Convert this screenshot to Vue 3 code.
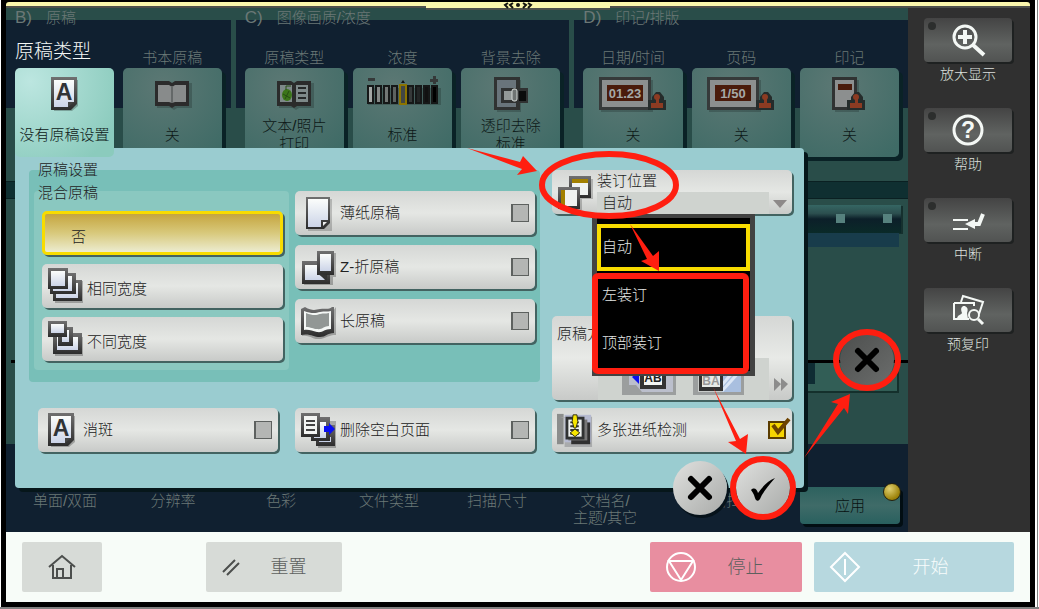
<script setup>
import { ref } from 'vue'

const sections = [
  {
    code: 'B)', name: '原稿',
    cards: [
      { title: '原稿类型', icon: 'page-a', lines: ['没有原稿设置'], active: true },
      { title: '书本原稿', icon: 'book', lines: ['关'] },
    ],
  },
  {
    code: 'C)', name: '图像画质/浓度',
    cards: [
      { title: '原稿类型', icon: 'photo-book', lines: ['文本/照片', '打印'] },
      { title: '浓度', icon: 'density', lines: ['标准'] },
      { title: '背景去除', icon: 'bleed', lines: ['透印去除', '标准'] },
    ],
  },
  {
    code: 'D)', name: '印记/排版',
    cards: [
      { title: '日期/时间', icon: 'stamp-date', lines: ['关'] },
      { title: '页码', icon: 'stamp-page', lines: ['关'] },
      { title: '印记', icon: 'stamp', lines: ['关'] },
    ],
  },
]

// Lettering drawn on top of an icon, placed in its 36px box.
const lettering = {
  'page-a': { text: 'A', x: 18, y: 24, size: 23, fill: '#303336' },
  'stamp-date': { text: '01.23', x: 10, y: 22, size: 13, fill: '#a5a9a7' },
  'stamp-page': { text: '1/50', x: 10, y: 22, size: 13, fill: '#a5a9a7' },
  help: { text: '?', x: 18, y: 26, size: 23, fill: '#f4f8f5' },
}

const mixed = ref('none')
const mixedOptions = [
  { value: 'none', text: '否' },
  { value: 'same', text: '相同宽度', icon: 'stack-same' },
  { value: 'diff', text: '不同宽度', icon: 'stack-diff' },
]

const paper = ref([
  { text: '薄纸原稿', icon: 'thin', on: false },
  { text: 'Z-折原稿', icon: 'zfold', on: false },
  { text: '长原稿', icon: 'long', on: false },
])
const extras = ref([
  { text: '消斑', icon: 'page-a', on: false },
  { text: '删除空白页面', icon: 'blank', on: false },
  { text: '多张进纸检测', icon: 'multifeed', on: true },
])

const binding = ref('自动')
const bindingOptions = ['自动', '左装订', '顶部装订']

const lowerTabs = [['单面/双面'], ['分辨率'], ['色彩'], ['文件类型'], ['扫描尺寸'], ['文档名/', '主题/其它'], ['页面扫描']]

const sideKeys = [
  { text: '放大显示', icon: 'zoom', led: true },
  { text: '帮助', icon: 'help', led: true },
  { text: '中断', icon: 'interrupt', led: true },
  { text: '预复印', icon: 'proof', led: false },
]
</script>

<template>
  <div class="frame">
    <svg class="defs" aria-hidden="true">
      <defs>
        <linearGradient id="edge" x1="0" y1="0" x2="0" y2="1">
          <stop offset="0" stop-color="#707070" /><stop offset="1" stop-color="#2c2c2c" />
        </linearGradient>
        <linearGradient id="sheet" x1="0" y1="0" x2="0" y2="1">
          <stop offset="0" stop-color="#fbfdfb" /><stop offset="1" stop-color="#ccd4e8" />
        </linearGradient>
      </defs>
      <symbol id="page-a" viewBox="0 0 36 36">
        <path d="M8 4h24v26l-6 5H8z" fill="#00000040" />
        <path d="M5 1h26v27l-6 6H5z" fill="url(#edge)" />
        <path d="M8 4h20v22h-6v5H8z" fill="url(#sheet)" />
        <path d="M22 31v-5h6z" fill="#444" />
      </symbol>
      <symbol id="book" viewBox="0 0 36 36">
        <path d="M3 7h35v25H23l-3 2-3-2H3z" fill="#00000030" />
        <path d="M1 5h14l3 2 3-2h14v25H21l-3 2-3-2H1z" fill="#2b2b2b" />
        <path d="M4 9h11l3 2v16l-3-1H4zM32 9H21l-3 2v16l3-1h11z" fill="#888b8b" />
        <path d="M17 10h2v17h-2z" fill="#646868" />
      </symbol>
      <symbol id="photo-book" viewBox="0 0 36 36">
        <path d="M3 7h35v25H23l-3 2-3-2H3z" fill="#00000030" />
        <path d="M1 5h14l3 2 3-2h14v25H21l-3 2-3-2H1z" fill="#2b2b2b" />
        <path d="M4 9h12v17H4zM20 9h12v17H20z" fill="#7e8989" />
        <ellipse cx="11" cy="19" rx="5" ry="6" fill="#3c751a" />
        <path d="M10 14V10h5M7 18l7 4M13 15l-4 8" stroke="#274c14" fill="none" />
        <path d="M22 12h8M22 17h8M22 22h8" stroke="#252828" stroke-width="2" />
      </symbol>
      <symbol id="density" viewBox="0 0 76 36">
        <path d="M3 12h73v17H3z" fill="#00000030" />
        <path d="M3 2h7v3H3zM65 3h8v3h-8zM68 0h3v8h-3z" fill="#353939" />
        <g stroke="#161818" stroke-width="2">
          <rect x="3" y="10" width="5" height="17" fill="#a3a7a5" />
          <rect x="11" y="10" width="5" height="17" fill="#858987" />
          <rect x="19" y="10" width="5" height="17" fill="#737775" />
          <rect x="27" y="10" width="5" height="17" fill="#5c6260" />
          <rect x="43" y="10" width="5" height="17" fill="#353939" />
          <rect x="51" y="10" width="5" height="17" fill="#222525" />
          <rect x="59" y="10" width="5" height="17" fill="#111" />
          <rect x="67" y="10" width="5" height="17" fill="#000" />
        </g>
        <rect x="35" y="9" width="6" height="19" fill="#424745" stroke="#8c7400" stroke-width="2" />
        <path d="M36 7l2-3 2 3z" fill="#111" />
      </symbol>
      <symbol id="bleed" viewBox="0 0 36 36">
        <path d="M4 4h24v32H4z" fill="#00000030" />
        <path d="M1 1h26v33H1z" fill="#303232" /><path d="M4 4h19v27H4z" fill="#69747b" />
        <path d="M8 12h27v15H8z" fill="#303232" /><path d="M11 15h9v9h-9z" fill="#939998" />
        <rect x="19" y="13" width="5" height="12" rx="2" fill="#6f7473" stroke="#d5dad8" />
        <path d="M26 15h7v10h-7z" fill="#0b0c0c" />
      </symbol>
      <symbol id="stamp-body" viewBox="0 0 20 20">
        <path d="M1 19V9h4V6l4-5h4l4 5v3h2v10z" fill="#252c2b" />
        <circle cx="10" cy="6" r="3" fill="#8c3b22" />
        <path d="M9 8h3v4h4v5H4v-5h5z" fill="#8c3b22" />
      </symbol>
      <symbol id="stamp-date" viewBox="0 0 76 36">
        <path d="M6 4h52v32H6z" fill="#00000030" />
        <path d="M4 1h52v33H4z" fill="#363a3a" /><path d="M7 4h46v27H7z" fill="#8c8f8f" />
        <path d="M12 9h36v16H12z" fill="#4a1b0b" />
        <use href="#stamp-body" x="52" y="15" width="20" height="20" />
      </symbol>
      <symbol id="stamp-page" viewBox="0 0 76 36">
        <path d="M6 4h52v32H6z" fill="#00000030" />
        <path d="M4 1h52v33H4z" fill="#363a3a" /><path d="M7 4h46v27H7z" fill="#8c8f8f" />
        <path d="M12 9h36v16H12z" fill="#4a1b0b" />
        <use href="#stamp-body" x="52" y="15" width="20" height="20" />
      </symbol>
      <symbol id="stamp" viewBox="0 0 36 36">
        <path d="M4 4h24v32H4z" fill="#00000030" />
        <path d="M1 1h25v33H1z" fill="#303232" /><path d="M4 4h19v27H4z" fill="#8c8f8f" />
        <path d="M7 8h14v6H7z" fill="#4a1b0b" />
        <use href="#stamp-body" x="15" y="15" width="20" height="20" />
      </symbol>
      <symbol id="stack-same" viewBox="0 0 36 36">
        <path d="M8 22h13v-8h15v22H8z" fill="#00000040" />
        <path d="M6 13h29v21H6z" fill="url(#edge)" /><path d="M9 16h22v15H9z" fill="url(#sheet)" />
        <path d="M3 6h26v21H3z" fill="url(#edge)" /><path d="M6 9h19v15H6z" fill="url(#sheet)" />
        <path d="M1 1h20v21H1z" fill="url(#edge)" /><path d="M4 4h14v15H4z" fill="url(#sheet)" />
      </symbol>
      <symbol id="stack-diff" viewBox="0 0 36 36">
        <path d="M8 17h28v19H8z" fill="#00000040" />
        <path d="M6 13h29v21H6z" fill="url(#edge)" /><path d="M10 17h21v13H10z" fill="url(#sheet)" />
        <path d="M11 7h15v19H11z" fill="url(#edge)" /><path d="M15 10h7v12h-7z" fill="url(#sheet)" />
        <path d="M1 1h19v16H1z" fill="url(#edge)" /><path d="M4 4h13v9H4z" fill="url(#sheet)" />
      </symbol>
      <symbol id="thin" viewBox="0 0 36 36">
        <path d="M8 4h24v32H8z" fill="#00000030" />
        <path d="M6 2h24v26l-6 6H6z" fill="url(#edge)" />
        <path d="M8 4h20v21h-7v7H8z" fill="url(#sheet)" /><path d="M23 31v-4h4z" fill="#eee" />
      </symbol>
      <symbol id="zfold" viewBox="0 0 36 36">
        <path d="M4 14h16V4h16v24h-3v9H4z" fill="#00000040" />
        <path d="M2 12h16v7h12v16H2z" fill="url(#edge)" />
        <path d="M5 16h13l2 9 5 6H5z" fill="url(#sheet)" />
        <path d="M17 2h17v24H17z" fill="url(#edge)" /><path d="M20 5h11v17H20z" fill="url(#sheet)" />
        <path d="M17 24l10 8V26z" fill="#333" />
      </symbol>
      <symbol id="long" viewBox="0 0 36 36">
        <path d="M2 8v25c8-2 12 5 19 3s9-4 15-4V4l-3 4z" fill="#00000040" />
        <path d="M1 6l4-2c7 4 10 3 15 2 6-1 8 1 12-2h2v26c-7 0-8 4-14 4-7 0-10-4-19-2z" fill="url(#edge)" />
        <path d="M4 8c8 3 12 2 16 1 5-1 7 0 11-1v18c-7 0-8 4-14 3-5-1-8-3-13-2z" fill="#f4f7f5" />
        <path d="M6 10c7 3 11 2 14 1 4-1 5 0 9-1v13c-5 0-7 4-12 3-4 0-6-2-11-2z" fill="#929795" />
      </symbol>
      <symbol id="blank" viewBox="0 0 36 36">
        <path d="M18 9h18v28H18z" fill="#00000040" />
        <path d="M16 13h19v21H16z" fill="url(#edge)" /><path d="M19 25h12v5H19z" fill="#c8d2e8" />
        <path d="M11 5h19v24H11z" fill="url(#edge)" /><path d="M14 10h12v16H14z" fill="url(#sheet)" />
        <path d="M1 1h19v24H1z" fill="url(#edge)" /><path d="M4 4h13v18H4z" fill="#f3f5f3" />
        <path d="M6 9h9M6 13h9M6 18h9" stroke="#444" stroke-width="2" />
        <path d="M24 14h5v-3l6 6-6 6v-3h-5z" fill="#0b10ef" />
      </symbol>
      <symbol id="multifeed" viewBox="0 0 38 36">
        <path d="M0 1h7v32H0z" fill="#8b8d8c" /><path d="M3 5h5v31h29V4H9z" fill="#a9abac" />
        <path d="M8 2h28v29H8z" fill="#b5bad0" />
        <path d="M15 10h20v23H15z" fill="#303030" /><path d="M12 7h20v22H12z" fill="#777" />
        <path d="M9 4h20v24H9z" fill="#303232" /><path d="M12 7h14v18H12z" fill="#eef1ef" />
        <path d="M14 10h9M14 14h9M14 18h9M14 22h9" stroke="#333" stroke-width="2" />
        <path d="M17 2h4l1 7-2 7h-2l-2-7zM19 17l5 4-5 4-5-4z" fill="#f7e600" stroke="#2b2a10" />
      </symbol>
      <symbol id="zoom" viewBox="0 0 36 36">
        <g fill="none" stroke="#f4f8f5" stroke-width="3">
          <circle cx="15" cy="15" r="11" /><path d="M15 8v14M8 15h14M23 23l11 10" stroke-width="4" />
        </g>
      </symbol>
      <symbol id="help" viewBox="0 0 36 36">
        <circle cx="18" cy="18" r="14" fill="none" stroke="#f4f8f5" stroke-width="3" />
      </symbol>
      <symbol id="interrupt" viewBox="0 0 36 36">
        <path d="M3 18h15M3 27h15" stroke="#f4f8f5" stroke-width="2" />
        <path d="M33 12l-4 10h-8" fill="none" stroke="#f4f8f5" stroke-width="4" />
        <path d="M15 22l10-5v10z" fill="#f4f8f5" />
      </symbol>
      <symbol id="proof" viewBox="0 0 36 36">
        <path d="M11 10l2-6 20 6-4 12" fill="none" stroke="#f4f8f5" stroke-width="2" />
        <path d="M4 11h20v3M19 27H4V11" fill="none" stroke="#f4f8f5" stroke-width="2" />
        <path d="M7 27c0-4 4-4 5-6-2-5 0-7 2-7s5 2 3 7l1 6z" fill="#f4f8f5" />
        <circle cx="24" cy="23" r="5" fill="none" stroke="#f4f8f5" stroke-width="2" /><path d="M28 27l5 5" stroke="#f4f8f5" stroke-width="3" />
      </symbol>
      <symbol id="cross" viewBox="0 0 28 28">
        <path d="M5 5l18 18M23 5L5 23" stroke="#000" stroke-width="6" stroke-linecap="round" />
      </symbol>
      <symbol id="tick" viewBox="0 0 28 28">
        <path d="M2 16c3-3 6-1 7 3C14 12 19 7 26 4 20 11 14 18 11 25 9 28 7 27 6 24 5 20 4 19 2 16z" fill="#000" />
      </symbol>
    </svg>

    <div class="screen">
      <div class="strip">
        <button class="strip-tab" aria-label="展开">
          <svg viewBox="0 0 30 7" width="30" height="7">
            <path d="M5 1L2 3l3 3M10 1L7 3l3 3M20 1l3 2-3 3M25 1l3 2-3 3" fill="none" stroke="#151510" stroke-width="2" />
            <circle cx="15" cy="3" r="2" fill="#151510" />
          </svg>
        </button>
      </div>

      <div class="body">
        <main class="scanner">
          <div class="sections">
            <section v-for="s in sections" :key="s.code" class="section">
              <h2><span>{{ s.code }}</span>{{ s.name }}</h2>
              <div class="cards">
                <div v-for="c in s.cards" :key="c.title" class="cell">
                  <h3 :class="{ on: c.active }">{{ c.title }}</h3>
                  <button class="card" :class="{ active: c.active }">
                    <svg class="card-icon" viewBox="-20 0 76 36">
                      <use :href="'#' + c.icon" x="-20" width="76" height="36" />
                      <text v-if="lettering[c.icon]" class="letter" :x="lettering[c.icon].x" :y="lettering[c.icon].y" :font-size="lettering[c.icon].size" :fill="lettering[c.icon].fill">{{ lettering[c.icon].text }}</text>
                    </svg>
                    <span class="card-text"><span v-for="l in c.lines" :key="l">{{ l }}</span></span>
                  </button>
                </div>
              </div>
            </section>
          </div>

          <div class="band"></div>
          <div class="rail"><i></i><i></i></div>
          <div class="rail-foot"></div>
          <div class="rule"></div>
          <div class="tray"><i></i></div>

          <div class="lower">
            <div class="tabs">
              <a v-for="t in lowerTabs" :key="t[0]" href="#"><span v-for="l in t" :key="l">{{ l }}</span></a>
            </div>
            <button class="apply">应用<i></i></button>
          </div>

          <button class="round dim" aria-label="关闭"><svg><use href="#cross" /></svg></button>

          <div class="dialog" role="dialog" aria-label="原稿设置">
            <div class="upper">
              <section class="group">
                <h3>原稿设置</h3>
                <div class="mixed">
                  <h4>混合原稿</h4>
                  <label v-for="o in mixedOptions" :key="o.value" class="tile radio" :class="{ picked: mixed === o.value }">
                    <input v-model="mixed" class="hidden" type="radio" name="mixed" :value="o.value">
                    <svg v-if="o.icon" class="icon"><use :href="'#' + o.icon" /></svg>
                    <span>{{ o.text }}</span>
                  </label>
                </div>
                <div class="column">
                  <label v-for="p in paper" :key="p.text" class="tile">
                    <svg class="icon"><use :href="'#' + p.icon" /></svg>
                    <span class="grow">{{ p.text }}</span>
                    <input v-model="p.on" type="checkbox">
                  </label>
                </div>
              </section>

              <div class="right">
                <div class="tile binding">
                  <svg class="icon" viewBox="0 0 36 36">
                    <path d="M14 5h22v20H25v11H4V18h10z" fill="#00000035" />
                    <path d="M12 2h22v22H12z" fill="url(#edge)" /><path d="M15 5h16v16H15z" fill="#f0f3f1" /><path d="M15 5h16v4H15z" fill="#a28000" />
                    <path d="M1 13h22v22H1z" fill="url(#edge)" /><path d="M4 16h16v16H4z" fill="#f0f3f1" /><path d="M4 16h4v16H4z" fill="#a28000" />
                  </svg>
                  <div class="binding-field">
                    <label for="binding">装订位置</label>
                    <select id="binding" v-model="binding">
                      <option v-for="b in bindingOptions" :key="b">{{ b }}</option>
                    </select>
                  </div>
                  <svg class="caret" viewBox="0 0 14 8"><path d="M0 0h14L7 8z" fill="#8d8989" /></svg>
                  <div class="menu" role="listbox" aria-label="装订位置">
                    <button v-for="b in bindingOptions" :key="b" role="option" :aria-selected="binding === b" :class="{ sel: binding === b }" @click="binding = b">{{ b }}</button>
                  </div>
                </div>
                <button class="orient">
                  <span class="orient-label">原稿方向</span>
                  <span class="orient-row">
                    <svg class="orient-icon" viewBox="0 0 54 38">
                      <path d="M0 0h54v37H0z" fill="#9b9e9e" /><path d="M7 0h44v34H20l-6-7H7z" fill="#bbbfcc" />
                      <path d="M18 0h26v31H18z" fill="#333" /><path d="M22 3h18v24H22z" fill="#f3f5f3" />
                      <path d="M10 19l7-6v13z" fill="#0b10ef" />
                      <text class="letter" x="31" y="24" font-size="12" fill="#222">AB</text>
                    </svg>
                    <svg class="orient-icon" viewBox="0 0 54 38">
                      <path d="M1 0h51v37H1z" fill="#9b9e9e" /><path d="M6 0h43v34H6z" fill="#c9ccca" />
                      <path d="M30 0h19v34H30z" fill="#a9bfdf" /><path d="M30 27L46 8M30 33L49 12" stroke="#dce7f5" stroke-width="3" />
                      <path d="M7 0h24v33H7z" fill="#333" /><path d="M10 3h18v26H10z" fill="#e8ebe8" />
                      <text class="letter" x="19" y="27" font-size="12" fill="#999">BA</text>
                    </svg>
                  </span>
                  <svg class="next" viewBox="0 0 14 13"><path d="M0 0l7 6-7 7zM7 0l7 6-7 7z" fill="#8c8c8c" /></svg>
                </button>
              </div>
            </div>

            <div class="extras">
              <label v-for="e in extras" :key="e.text" class="tile">
                <svg class="icon" viewBox="0 0 36 36">
                  <use :href="'#' + e.icon" />
                  <text v-if="lettering[e.icon]" class="letter" :x="lettering[e.icon].x" :y="lettering[e.icon].y" :font-size="lettering[e.icon].size" :fill="lettering[e.icon].fill">{{ lettering[e.icon].text }}</text>
                </svg>
                <span class="grow">{{ e.text }}</span>
                <span class="check">
                  <input v-model="e.on" type="checkbox">
                  <svg v-if="e.on" class="mark" viewBox="0 0 22 20"><path d="M4 8l5 7L20 2" fill="none" stroke="#6d4300" stroke-width="4" /></svg>
                </span>
              </label>
            </div>

            <div class="confirm">
              <button class="round" aria-label="取消"><svg><use href="#cross" /></svg></button>
              <button class="round" aria-label="确定"><svg><use href="#tick" /></svg></button>
            </div>
          </div>
        </main>

        <aside class="side">
          <div v-for="k in sideKeys" :key="k.text" class="key">
            <button :aria-label="k.text">
              <i v-if="k.led"></i>
              <svg viewBox="0 0 36 36">
                <use :href="'#' + k.icon" />
                <text v-if="lettering[k.icon]" class="letter" :x="lettering[k.icon].x" :y="lettering[k.icon].y" :font-size="lettering[k.icon].size" :fill="lettering[k.icon].fill">{{ lettering[k.icon].text }}</text>
              </svg>
            </button>
            <span>{{ k.text }}</span>
          </div>
        </aside>
      </div>

      <footer class="footer">
        <button class="home" aria-label="主页">
          <svg viewBox="0 0 28 28" width="28" height="28"><path d="M1 14L14 3l13 11M5 12v13h18V12M9 25v-9h6v9" fill="none" stroke="#4c4f4d" stroke-width="2" /></svg>
        </button>
        <button class="reset">
          <svg viewBox="0 0 20 20" width="20" height="20"><path d="M2 15L14 3M6 18L18 6" fill="none" stroke="#4c4f4d" stroke-width="2" /></svg>
          <span>重置</span>
        </button>
        <button class="stop">
          <svg viewBox="0 0 32 32" width="32" height="32"><g fill="none" stroke="#fff" stroke-width="2"><circle cx="16" cy="16" r="14" /><path d="M4 10h24L16 29z" /></g></svg>
          <span>停止</span>
        </button>
        <button class="start">
          <svg viewBox="0 0 32 32" width="32" height="32"><path d="M16 2l14 14-14 14L2 16zM16 8v16" fill="none" stroke="#fff" stroke-width="2" /></svg>
          <span>开始</span>
        </button>
      </footer>
    </div>

    <svg class="marks" viewBox="0 0 1039 609" width="1039" height="609" aria-hidden="true">
      <g fill="none" stroke="#ff1e10" stroke-width="6">
        <ellipse cx="609" cy="185" rx="67" ry="31" />
        <rect x="595" y="276" width="151" height="95" rx="3" />
        <ellipse cx="867" cy="360" rx="31" ry="28" />
        <ellipse cx="763" cy="488" rx="30" ry="29" />
      </g>
      <g fill="#ff1e10">
        <path d="M467 148l53 14 3-6 14 15-20 4 5-6z" />
        <path d="M630 224l23 32 6-5v20l-18-10 6-2z" />
        <path d="M713 387l27 52 8-5-2 20-18-12 8-1z" />
        <path d="M804 458l34-54-7-2 19-8-2 20-4-6z" />
      </g>
    </svg>
  </div>
</template>

<style>
body { margin: 0; background: #fff; }
</style>

<style scoped>
* { box-sizing: border-box; }
h2, h3, h4 { margin: 0; font-weight: inherit; }
button, select, input { font: inherit; color: inherit; margin: 0; padding: 0; border: 0; }
button { cursor: pointer; }
a { color: inherit; text-decoration: none; }
i { display: block; }

.frame {
  position: relative;
  display: flex;
  min-height: 100vh;
  padding: 2px 9px 7px 6px;
  background: linear-gradient(90deg, #fff 1px, #000 1px, #000 calc(100% - 4px), #fff calc(100% - 4px), #fff calc(100% - 2px), #808080 calc(100% - 2px), #808080 calc(100% - 1px), #fff calc(100% - 1px));
  box-shadow: inset 0 -2px 0 #808080;
  font-family: "Liberation Sans", "Noto Sans CJK SC", sans-serif;
  font-size: 15px;
  font-weight: 300;
  line-height: 18px;
  color: #222;
  overflow: hidden;
}
.defs { position: absolute; width: 0; height: 0; }
.letter { font-family: "Liberation Sans", sans-serif; font-weight: 700; text-anchor: middle; }
.screen { flex: 1; display: flex; flex-direction: column; min-width: 0; }

.strip { position: relative; height: 6px; background: #fbf7ad; border-bottom: 2px solid #4f514c; border-radius: 3px 3px 0 0; }
.strip-tab { position: absolute; z-index: 3; left: 41%; right: 41%; top: 0; height: 8px; display: flex; justify-content: center; background: #fbf7ad; border-bottom: 2px solid #4f514c; }
.strip-tab svg { flex: none; }

.body { flex: 1; display: flex; }
.scanner { position: relative; flex: 1; display: flex; flex-direction: column; min-width: 0; background: #294d49; }

.sections { display: grid; grid-template-columns: 225fr 334fr 334fr; gap: 5px; }
.section { background: linear-gradient(#294d49 12px, #102030 12px, #102030 100px, #294d49 100px); min-width: 0; }
.section h2 { display: flex; gap: 14px; height: 20px; padding-left: 9px; font-size: 15px; line-height: 20px; color: #6b7876; }
.section h2 span { font-size: 17px; }
.cards { display: grid; grid-auto-flow: column; grid-auto-columns: minmax(0, 1fr); gap: 9px; padding: 20px 9px 0; }
.cell { display: flex; flex-direction: column; }
.cell h3 { height: 20px; line-height: 20px; font-size: 15px; text-align: center; color: #6b7876; white-space: nowrap; }
.cell h3.on { height: 32px; margin-top: -12px; line-height: 32px; font-size: 19px; text-align: left; color: #f5f8f6; }
.card { display: flex; flex-direction: column; align-items: center; gap: 5px; padding: 8px 0 4px; border-radius: 5px; background: radial-gradient(circle at 40% 20%, #5c7874, #3f6b66 90%); box-shadow: 4px 4px 0 #0a2226; color: #0d1817; }
.card.active { position: relative; z-index: 2; background: radial-gradient(circle at 15% 15%, #bce6e0, #8bcbbd 85%); box-shadow: none; }
.card-icon { width: 76px; height: 36px; }
.card-text { display: flex; flex-direction: column; justify-content: center; height: 36px; white-space: nowrap; }

.band { height: 18px; margin-top: 24px; background: #0f2f31; border-top: 1px solid #0a2022; border-bottom: 1px solid #0a2022; }
.rail { display: flex; justify-content: flex-end; gap: 38px; height: 28px; margin: 6px 7px 0 12px; padding: 9px 9px 0; background: linear-gradient(#356663, #2c4f4f 30%, #0c1f29 50%, #0a2a28); box-shadow: 2px 1px 0 #15302e; }
.rail i { width: 9px; height: 9px; background: #56817e; }
.rail-foot { height: 14px; margin: 0 9px 0 12px; background: #183c4b; }
.rule { height: 3px; margin: auto 0 0 5px; background: #000; }
.tray { display: flex; justify-content: flex-end; height: 30px; margin: 0 9px 51px 12px; background: #325e56; border: 2px solid #14302c; border-top: 0; }
.tray i { width: 14px; height: 21px; margin-right: 82px; background: #0f2c33; }

.lower { display: flex; justify-content: space-between; height: 88px; padding: 0 8px 0 5px; background: #102030; }
.tabs { flex: 0 0 782px; display: grid; grid-template-columns: repeat(6, 108fr) 134fr; padding-top: 48px; text-align: center; color: #6b7876; line-height: 17px; }
.tabs a { display: flex; flex-direction: column; }
.apply { position: relative; flex: 0 1 100px; height: 37px; margin-top: 43px; border-radius: 4px; background: linear-gradient(#2d625f, #3f6b68 50%, #29605f); box-shadow: 3px 3px 0 #020e13; color: #071111; }
.apply i { position: absolute; right: -1px; top: -4px; width: 18px; height: 18px; border: 1px solid #26210c; border-radius: 50%; background: radial-gradient(circle at 35% 30%, #e0d070, #9b8108 70%); }

.round { width: 54px; height: 54px; border-radius: 50%; display: flex; align-items: center; justify-content: center; background: linear-gradient(135deg, #e0e1df, #a8aaa8); box-shadow: 2px 3px 0 #06121a; }
.round svg { width: 28px; height: 28px; }
.round.dim { position: absolute; right: 14px; top: 325px; background: linear-gradient(135deg, #4c4e4d, #6c6e6d); box-shadow: none; }

.dialog { position: absolute; z-index: 1; left: 9px; right: 104px; top: 140px; bottom: 44px; padding: 22px 12px 0 14px; background: #9accd0; border-radius: 4px; box-shadow: 4px 4px 0 #06161a; }
.upper { display: grid; grid-template-columns: 511fr 240fr; gap: 12px; }
.group { display: grid; grid-template-columns: 255fr 240fr; gap: 0 6px; padding: 0 5px 12px; border-radius: 4px; background: #78bfb8; }
.group h3 { grid-column: 1 / -1; height: 30px; margin-top: -9px; padding-left: 4px; line-height: 18px; font-size: 15px; }
.mixed { display: flex; flex-direction: column; gap: 9px; padding: 0 6px 9px 8px; border-radius: 4px; background: #8ac8c0; }
.mixed h4 { height: 18px; margin: -7px 0 0 -4px; line-height: 18px; }
.column { display: flex; flex-direction: column; gap: 10px; }

.tile { display: flex; align-items: center; gap: 4px; width: 100%; height: 44px; padding: 0 6px 0 5px; border-radius: 5px; background: linear-gradient(#d5d7d5, #e5e7e4 50%, #c8cac8); box-shadow: 2px 2px 0 #436361; white-space: nowrap; }
.icon { flex: none; width: 36px; height: 36px; }
.grow { flex: 1; }
.radio { position: relative; padding-top: 6px; }
.radio .icon { margin-top: -8px; }
.picked { padding: 8px 0 0 26px; border: 3px solid #f8dc00; background: linear-gradient(#c5a53f, #d8c97c 50%, #ececd0); }
.hidden { position: absolute; opacity: 0; width: 1px; height: 1px; }
input[type="checkbox"] { display: block; flex: none; appearance: none; width: 18px; height: 18px; border: 1px solid #5d615f; border-left-width: 2px; background: #b4b6b4; }
input[type="checkbox"]:checked { border: 2px solid #5a3c00; background: #f6d400; }
.check { position: relative; }
.mark { position: absolute; left: 1px; top: -4px; width: 22px; height: 20px; }

.right { display: flex; flex-direction: column; justify-content: space-between; margin-bottom: -18px; }
.binding { position: relative; padding-right: 5px; }
.binding-field { flex: 1; display: flex; flex-direction: column; align-self: stretch; }
.binding-field label { height: 22px; line-height: 21px; }
.binding-field select { appearance: none; width: 100%; height: 22px; padding-left: 5px; background: #cfd3cf; line-height: 22px; }
.caret { flex: none; width: 14px; height: 8px; margin: 24px 0 0; }
.menu { position: absolute; z-index: 4; left: 40px; top: 44px; width: 163px; padding: 6px 0 4px; display: flex; flex-direction: column; background: #000; border: 5px solid #424242; border-top-width: 4px; }
.menu button { height: 48px; padding: 0 5px; background: none; color: #e3e6e4; text-align: left; }
.menu button.sel { padding: 0 1px 2px; height: 47px; border: 4px solid #f8dc00; }
.orient { position: relative; display: grid; grid-template-columns: 46px 1fr 23px; grid-template-rows: 42px 42px; height: 84px; border-radius: 5px; background: linear-gradient(#d5d7d5, #e8eae7 50%, #c8cac8); box-shadow: 2px 2px 0 #436361; }
.orient-label { grid-column: 1 / -1; padding: 9px 5px; text-align: left; }
.orient-row { grid-column: 2; display: flex; justify-content: center; gap: 16px; background: #cfd3cf; }
.orient-icon { width: 54px; height: 38px; }
.next { grid-column: 3; width: 14px; height: 13px; margin: 20px 0 0 5px; }

.extras { display: grid; grid-template-columns: repeat(3, 1fr); gap: 17px; padding: 26px 0 0 9px; }
.confirm { position: absolute; right: 14px; bottom: -27px; display: flex; gap: 9px; }

.side { flex: none; display: flex; flex-direction: column; gap: 20px; width: 122px; padding: 10px 18px 0 16px; background: #303030; }
.key { display: flex; flex-direction: column; gap: 3px; height: 70px; font-size: 14px; text-align: center; color: #dde0de; }
.key button { position: relative; flex: none; height: 44px; display: flex; align-items: center; justify-content: center; border-radius: 4px; background: linear-gradient(#444, #606361 60%, #515352); box-shadow: 2px 2px 0 #1e2121; }
.key svg { width: 36px; height: 36px; }
.key i { position: absolute; left: 4px; top: 4px; width: 8px; height: 8px; border-radius: 50%; background: #2c2e2d; }

.footer { display: flex; height: 70px; padding: 10px 16px; background: #f7fcf8; font-size: 18px; }
.footer button { display: flex; align-items: center; border-radius: 2px; background: #d7dbd7; color: #5d605e; }
.footer button span { flex: 1; text-align: center; }
.footer svg { flex: none; }
.footer .home { flex: 0 0 80px; justify-content: center; }
.footer .reset { flex: 0 0 136px; margin: 0 auto 0 104px; padding: 0 6px 0 15px; }
.footer .stop { flex: 0 0 152px; padding: 0 8px 0 15px; background: #e88ea0; }
.footer .start { flex: 0 0 200px; margin-left: 12px; padding: 0 14px 0 15px; background: #b7d8df; color: #f8fcfc; }

.marks { position: absolute; z-index: 5; left: 0; top: 0; pointer-events: none; }
</style>
